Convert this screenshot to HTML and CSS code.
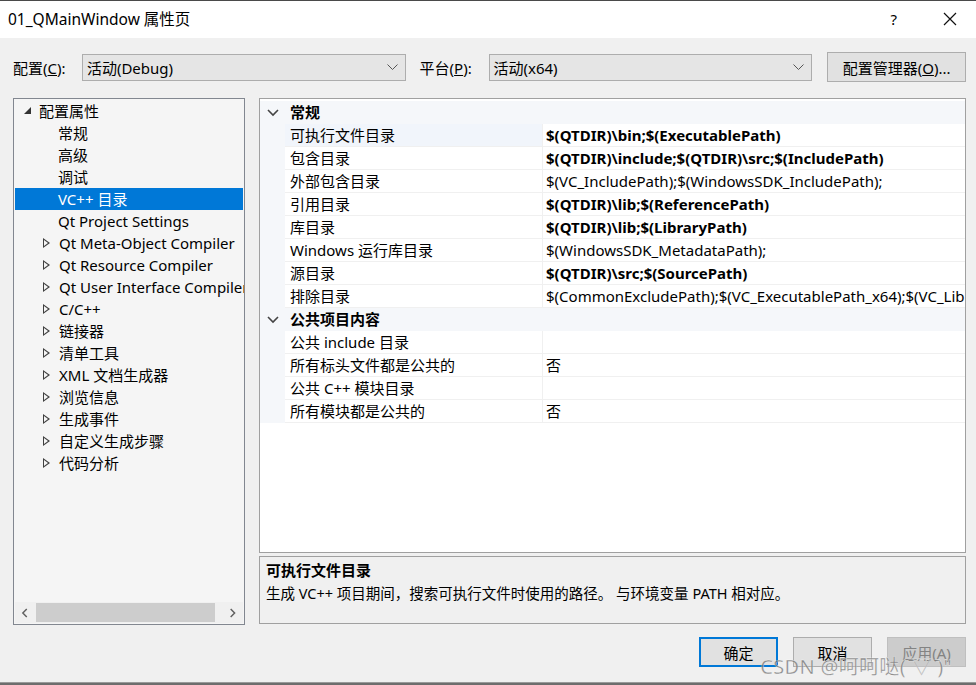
FILE: index.html
```html
<!DOCTYPE html>
<html lang="zh-CN">
<head>
    <meta charset="UTF-8">
    <title>01_QMainWindow 属性页</title>
    <link rel="stylesheet" href="styles.css">
</head>
<body>
<div class="window">
    <div class="titlebar">
        <span class="title">01_QMainWindow 属性页</span>
        <span class="help">?</span>
        <svg class="close" width="14" height="14" viewBox="0 0 14 14"><path d="M1 1L13 13M13 1L1 13" stroke="#111" stroke-width="1.2"/></svg>
    </div>

    <div class="content">
        <!-- 配置 / 平台 -->
        <div class="toprow">
            <label class="lbl">配置(<u>C</u>):</label>
            <div class="combo">
                <span>活动(Debug)</span>
                <svg width="11" height="7" viewBox="0 0 11 7"><path d="M0.5 0.5L5.5 5.5L10.5 0.5" fill="none" stroke="#555" stroke-width="1"/></svg>
            </div>
            <label class="lbl lbl2">平台(<u>P</u>):</label>
            <div class="combo">
                <span>活动(x64)</span>
                <svg width="11" height="7" viewBox="0 0 11 7"><path d="M0.5 0.5L5.5 5.5L10.5 0.5" fill="none" stroke="#555" stroke-width="1"/></svg>
            </div>
            <button class="btn mgr">配置管理器(<u>O</u>)...</button>
        </div>

        <div class="main">
            <!-- 左侧树 -->
            <div class="tree">
                <div class="tree-items">
                    <div class="node root"><span class="tri-down"></span>配置属性</div>
                    <div class="node leaf">常规</div>
                    <div class="node leaf">高级</div>
                    <div class="node leaf">调试</div>
                    <div class="node leaf selected">VC++ 目录</div>
                    <div class="node leaf">Qt Project Settings</div>
                    <div class="node"><span class="tri"></span>Qt Meta-Object Compiler</div>
                    <div class="node"><span class="tri"></span>Qt Resource Compiler</div>
                    <div class="node"><span class="tri"></span>Qt User Interface Compiler</div>
                    <div class="node"><span class="tri"></span>C/C++</div>
                    <div class="node"><span class="tri"></span>链接器</div>
                    <div class="node"><span class="tri"></span>清单工具</div>
                    <div class="node"><span class="tri"></span>XML 文档生成器</div>
                    <div class="node"><span class="tri"></span>浏览信息</div>
                    <div class="node"><span class="tri"></span>生成事件</div>
                    <div class="node"><span class="tri"></span>自定义生成步骤</div>
                    <div class="node"><span class="tri"></span>代码分析</div>
                </div>
                <div class="hscroll">
                    <svg width="21" height="20" viewBox="0 0 21 20"><path d="M12 6L8 10L12 14" fill="none" stroke="#606060" stroke-width="1.5"/></svg>
                    <div class="track"><div class="thumb"></div></div>
                    <svg width="29" height="20" viewBox="0 0 29 20"><path d="M16 6L20 10L16 14" fill="none" stroke="#606060" stroke-width="1.5"/></svg>
                </div>
            </div>

            <!-- 右侧属性表 -->
            <div class="right">
                <div class="grid">
                    <div class="group"><svg class="chev" width="12" height="8" viewBox="0 0 12 8"><path d="M1 1L6 6L11 1" fill="none" stroke="#444" stroke-width="1.6"/></svg>常规</div>
                    <div class="row sel"><div class="name">可执行文件目录</div><div class="val b">$(QTDIR)\bin;$(ExecutablePath)</div></div>
                    <div class="row"><div class="name">包含目录</div><div class="val b">$(QTDIR)\include;$(QTDIR)\src;$(IncludePath)</div></div>
                    <div class="row"><div class="name">外部包含目录</div><div class="val">$(VC_IncludePath);$(WindowsSDK_IncludePath);</div></div>
                    <div class="row"><div class="name">引用目录</div><div class="val b">$(QTDIR)\lib;$(ReferencePath)</div></div>
                    <div class="row"><div class="name">库目录</div><div class="val b">$(QTDIR)\lib;$(LibraryPath)</div></div>
                    <div class="row"><div class="name">Windows 运行库目录</div><div class="val">$(WindowsSDK_MetadataPath);</div></div>
                    <div class="row"><div class="name">源目录</div><div class="val b">$(QTDIR)\src;$(SourcePath)</div></div>
                    <div class="row"><div class="name">排除目录</div><div class="val">$(CommonExcludePath);$(VC_ExecutablePath_x64);$(VC_LibraryPath_x64)</div></div>
                    <div class="group"><svg class="chev" width="12" height="8" viewBox="0 0 12 8"><path d="M1 1L6 6L11 1" fill="none" stroke="#444" stroke-width="1.6"/></svg>公共项目内容</div>
                    <div class="row"><div class="name">公共 include 目录</div><div class="val"></div></div>
                    <div class="row"><div class="name">所有标头文件都是公共的</div><div class="val">否</div></div>
                    <div class="row"><div class="name">公共 C++ 模块目录</div><div class="val"></div></div>
                    <div class="row"><div class="name">所有模块都是公共的</div><div class="val">否</div></div>
                </div>
                <div class="desc">
                    <div class="desc-title">可执行文件目录</div>
                    <div class="desc-text">生成 VC++ 项目期间，搜索可执行文件时使用的路径。 与环境变量 PATH 相对应。</div>
                </div>
            </div>
        </div>

        <div class="buttons">
            <button class="btn ok">确定</button>
            <button class="btn">取消</button>
            <button class="btn disabled">应用(A)</button>
            <span class="watermark">CSDN @呵呵哒( ̄▽ ̄)"</span>
        </div>
    </div>
    <div class="bottom-edge"></div>
</div>
</body>
</html>
```

FILE: styles.css
```css
* {
    box-sizing: border-box;
}
body {
    margin: 0;
    font-family: "Noto Sans", "Noto Sans CJK SC", sans-serif;
    font-size: 15px;
    color: #000;
    background-color: #f0f0f0;
}
.window {
    width: 976px;
    height: 685px;
    display: flex;
    flex-direction: column;
    overflow: hidden;
}
.titlebar {
    height: 38px;
    background-color: #fff;
    border-top: 1px solid #4a4a4a;
    display: flex;
    align-items: center;
    padding-left: 8px;
    padding-bottom: 2px;
}
.title {
    font-size: 15.5px;
    flex: 1;
}
.help {
    font-size: 15px;
    margin-right: 46px;
}
.close {
    margin-right: 19px;
}
.content {
    flex: 1;
    padding: 14px 10px 0 13px;
    position: relative;
}
.toprow {
    display: flex;
    align-items: center;
    height: 30px;
}
.lbl {
    width: 69px;
}
.lbl2 {
    margin-left: 14px;
}
.combo {
    width: 324px;
    height: 27px;
    background-color: #e5e5e5;
    border: 1px solid #adadad;
    display: flex;
    align-items: center;
    justify-content: space-between;
    padding: 0 7px 0 4px;
}
.btn {
    font-family: inherit;
    font-size: 15px;
    height: 30px;
    width: 79px;
    background-color: #e1e1e1;
    border: 1px solid #adadad;
    padding: 0;
    color: #000;
}
.mgr {
    width: 139px;
    margin-left: 15px;
}
.main {
    display: flex;
    margin-top: 16px;
    height: 527px;
}
.tree {
    width: 232px;
    border: 1px solid #828790;
    background-color: #f5f5f5;
    display: flex;
    flex-direction: column;
}
.tree-items {
    flex: 1;
    overflow: hidden;
    padding: 1px 1px 0 1px;
}
.node {
    height: 22px;
    line-height: 23px;
    white-space: nowrap;
    padding-left: 44px;
    position: relative;
}
.node.leaf {
    padding-left: 43px;
}
.node.root {
    padding-left: 24px;
}
.node.selected {
    background-color: #0078d7;
    color: #fff;
}
.tri-down {
    position: absolute;
    left: 9px;
    top: 7px;
    width: 0;
    height: 0;
    border-left: 7px solid transparent;
    border-bottom: 7px solid #333;
}
.tri {
    position: absolute;
    left: 28px;
    top: 6px;
    width: 8px;
    height: 10px;
}
.tri::before {
    content: "";
    position: absolute;
    left: 0;
    top: 0;
    border-top: 5px solid transparent;
    border-bottom: 5px solid transparent;
    border-left: 7px solid #404040;
}
.tri::after {
    content: "";
    position: absolute;
    left: 1px;
    top: 2px;
    border-top: 3px solid transparent;
    border-bottom: 3px solid transparent;
    border-left: 4px solid #f5f5f5;
}
.hscroll {
    height: 21px;
    margin: 0 1px 1px 1px;
    background-color: #f0f0f0;
    display: flex;
    align-items: center;
}
.track {
    flex: 1;
    height: 19px;
}
.thumb {
    width: 179px;
    height: 100%;
    background-color: #cdcdcd;
}
.right {
    margin-left: 14px;
    width: 707px;
    display: flex;
    flex-direction: column;
}
.grid {
    height: 455px;
    background-color: #fff;
    border: 1px solid #a0a0a0;
    padding-top: 2px;
    overflow: hidden;
}
.group {
    height: 23px;
    line-height: 23px;
    background-color: #f5f7fa;
    font-weight: bold;
    padding-left: 30px;
    position: relative;
}
.chev {
    position: absolute;
    left: 7px;
    top: 8px;
}
.row {
    display: flex;
    height: 23px;
    background-color: #f5f7fa;
    padding-left: 25px;
}
.name {
    width: 258px;
    line-height: 23px;
    padding-left: 5px;
    background-color: #fff;
    border-bottom: 1px solid #f0f0f0;
    border-right: 1px solid #f0f0f0;
    white-space: nowrap;
}
.row.sel .name {
    background-color: #f1f5fb;
}
.val {
    flex: 1;
    line-height: 23px;
    padding-left: 3px;
    background-color: #fff;
    border-bottom: 1px solid #f0f0f0;
    white-space: nowrap;
    overflow: hidden;
}
.val.b {
    font-weight: bold;
}
.desc {
    margin-top: 3px;
    height: 68px;
    border: 1px solid #a0a0a0;
    background-color: #f0f0f0;
    padding: 2px 6px;
}
.desc-title {
    font-weight: bold;
    line-height: 22px;
}
.desc-text {
    line-height: 24px;
    font-size: 14.5px;
}
.buttons {
    display: flex;
    justify-content: flex-end;
    gap: 15px;
    margin-top: 12px;
    position: relative;
}
.btn.ok {
    border: 2px solid #0078d7;
}
.btn.disabled {
    background-color: #cccccc;
    border-color: #bfbfbf;
    color: #838383;
}
.watermark {
    position: absolute;
    right: 14px;
    top: 14px;
    font-size: 20px;
    letter-spacing: 0.3px;
    color: rgba(110, 110, 110, 0.75);
    -webkit-text-stroke: 0.4px rgba(255, 255, 255, 0.7);
    white-space: nowrap;
}
.bottom-edge {
    height: 3px;
    background-color: #6d6d6d;
    border-top: 1px solid #9a9a9a;
}
```
